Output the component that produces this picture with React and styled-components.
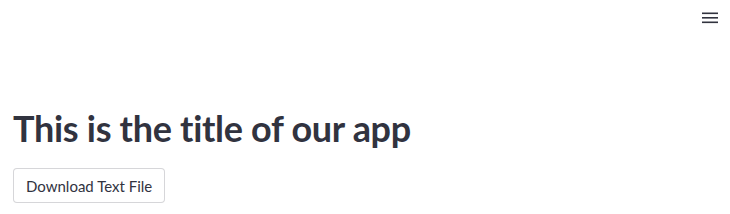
import React from "react";
import styled, { createGlobalStyle } from "styled-components";

const GlobalStyle = createGlobalStyle`
  body {
    margin: 0;
    background: #ffffff;
    font-family: Lato, "Liberation Sans", sans-serif;
    color: rgb(49, 51, 63);
  }
`;

const Page = styled.div`
  display: flex;
  flex-direction: column;
  min-height: 214px;
`;

const Header = styled.header`
  display: flex;
  justify-content: flex-end;
  align-items: center;
  height: 36px;
  padding: 0 9px 0 0;
`;

const MenuButton = styled.button`
  display: flex;
  align-items: center;
  justify-content: center;
  width: 22px;
  height: 22px;
  padding: 0;
  border: none;
  background: transparent;
  color: rgb(49, 51, 63);
  cursor: pointer;
`;

const Main = styled.main`
  display: flex;
  flex-direction: column;
  align-items: flex-start;
  padding: 69px 13px 0;
`;

const Title = styled.h1`
  margin: 0 0 17px;
  font-family: Lato, "Liberation Sans", sans-serif;
  font-weight: 700;
  font-size: 36px;
  line-height: 46px;
  letter-spacing: -0.3px;
  color: rgb(49, 51, 63);
`;

const DownloadButton = styled.button`
  display: inline-flex;
  align-items: center;
  justify-content: center;
  height: 35px;
  padding: 0 12px;
  font-family: Lato, "Liberation Sans", sans-serif;
  font-size: 15px;
  color: rgb(49, 51, 63);
  background: #ffffff;
  border: 1px solid rgba(49, 51, 63, 0.2);
  border-radius: 4px;
  cursor: pointer;
`;

const MenuIcon = () => (
  <svg width="16" height="12" viewBox="0 0 16 12">
    <rect x="0" y="0.5" width="16" height="1.6" fill="currentColor" />
    <rect x="0" y="5" width="16" height="1.6" fill="currentColor" />
    <rect x="0" y="9.5" width="16" height="1.6" fill="currentColor" />
  </svg>
);

export default function App() {
  return (
    <>
      <GlobalStyle />
      <Page>
        <Header>
          <MenuButton aria-label="Menu">
            <MenuIcon />
          </MenuButton>
        </Header>
        <Main>
          <Title>This is the title of our app</Title>
          <DownloadButton>Download Text File</DownloadButton>
        </Main>
      </Page>
    </>
  );
}
